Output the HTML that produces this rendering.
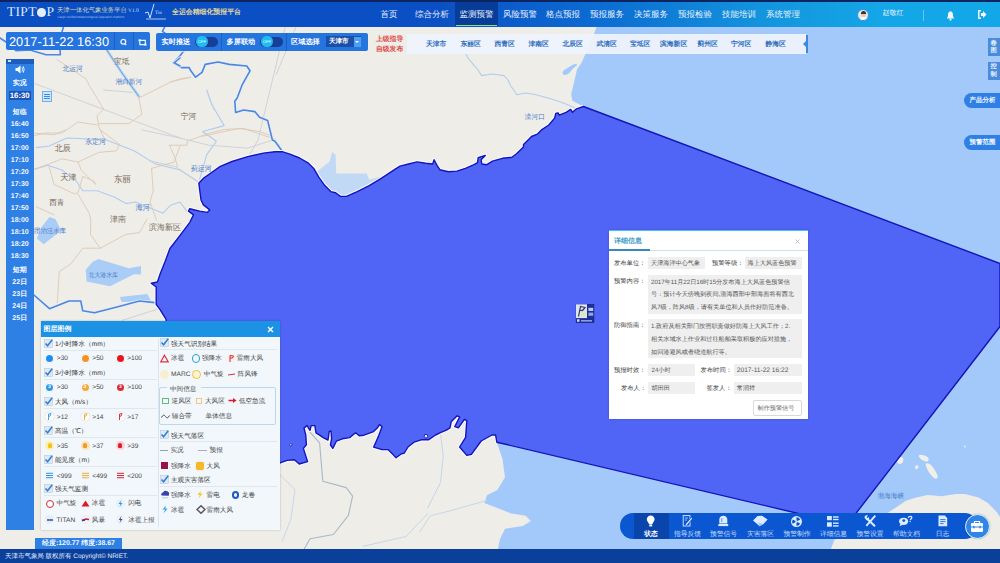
<!DOCTYPE html>
<html><head><meta charset="utf-8">
<style>
*{box-sizing:border-box;margin:0;padding:0}
html,body{width:1000px;height:563px;overflow:hidden;background:#eeede8;font-family:"Liberation Sans",sans-serif;text-rendering:geometricPrecision}
.abs{position:absolute}
#map{position:absolute;left:0;top:0;width:1000px;height:563px}
#hdr{position:absolute;left:0;top:0;width:1000px;height:27px;background:linear-gradient(90deg,#0a4ec2 0%,#0a50c4 44%,#0c6cd2 60%,#1394dc 76%,#14a6e6 88%,#12a8e8 100%);border-top:2px solid #0c2460}
.nav{position:absolute;top:2px;height:24px;line-height:24px;color:#e8f0ff;font-size:8.5px;text-align:center;white-space:nowrap}
.wt{color:#fff}
.sb{position:absolute;left:5.5px;width:28.5px;text-align:center;font-size:7px;line-height:9px;color:#f2f7ff;white-space:nowrap;font-weight:bold}
.lg{position:absolute;font-size:6.6px;line-height:9px;white-space:nowrap;color:#4a4a4a}
.pl{position:absolute;font-size:6.3px;line-height:9px;white-space:nowrap;color:#444}
.pt{position:absolute;font-size:6.15px;line-height:9px;white-space:nowrap;color:#555}
.pb{position:absolute;background:#efefef}
.tx7{font-size:7px;line-height:9px;white-space:nowrap;font-weight:bold}
.dist{top:39.5px;font-size:6.8px;line-height:9px;color:#2c6cbc;white-space:nowrap;font-weight:bold}
</style></head>
<body>
<svg id="map" width="1000" height="563" viewBox="0 0 1000 563">
<rect x="0" y="0" width="1000" height="563" fill="#eeede8"/>
<path d="M49.5,217 L55.4,219 L61.2,230.6 L43.7,244.3 L36.8,238.4 L41.7,226.7 Z" fill="#a9cdf7"/>
<path d="M98.4,259 L139.4,271.6 L110,286.3 L86.6,281.4 L85.7,269.7 L92.5,261.9 Z" fill="#a9cdf7"/>
<path d="M119.8,297 L147.2,294.1 L151,301 L121.8,301.9 Z" fill="#a9cdf7"/>
<path d="M130,268 L141,266 L141,274.6 L130,274 Z" fill="#a9cdf7"/>
<path d="M317.6,171.2 L329.6,161.6 L332,152 L335.6,154.4 L336.2,173.6 L366.8,173.6 L369.2,179.6 L383.6,176 L374,184.4 L357.2,191.6 L346.4,196.4 L335.6,192.8 L324.8,185.6 Z" fill="#c2d9f6"/>
<path d="M599,20 L594,34 L585.6,53.5 L581.6,62.7 L577,69.6 L574.6,80 L571.2,93.9 L572.3,100.8 L579.3,104.3 L582.7,106.6 L1000,263.5 L1000,20 Z" fill="#a2c9f9"/>
<path d="M496.8,442.2 L502.5,459.1 L505,477.2 L497.3,490 L487,495.2 L484.4,502.9 L497.3,508.1 L510.2,513.2 L525.7,515.8 L530.8,521 L523,526.1 L505,528.7 L500,539 L497.3,552 L829.6,552 L834.4,540 L880,518 L895.5,507.7 L905.9,500.8 L916.3,497.4 L927.8,495 L941.7,496.2 L955.5,493.9 L964.8,493.9 L978.6,497.4 L987.9,503.1 L997.1,512.4 L1000,517 L1000,326.5 L847,525 Z" fill="#a2c9f9"/>
<path d="M563,74.8 C561,73 563,70 566,68.5 C569,67 572,64 575.5,63.5 C578,63.5 578,65.5 576,66.5 C573,68 571,72 568,74.5 C566,75.5 564,75.5 563,74.8 Z" fill="#a2c9f9" stroke="#f6f7f5" stroke-width="0.6"/>
<path d="M896.8,460 C897,457.5 900,456.5 902.5,457.5 C904,459 903.5,462.5 901,463.8 C898.5,464.5 896.5,462.5 896.8,460 Z M918.5,455.5 C920.5,454 925,455 928,457.5 C929.5,459.5 928.5,461.8 926,461.5 C923,461 919.5,459 918.5,455.5 Z M915.2,466.5 C915.5,465 917.5,464.8 918.3,466 C918.8,467.8 917.5,469.6 916,469.3 C915,468.8 915,467.5 915.2,466.5 Z M925.5,464 C926.5,462.5 929.5,463 931.5,465.5 C934,468.5 937,473 937.8,476.5 C938,478.5 936,479.3 934,478 C930.5,475 926.5,469.5 925.5,464 Z" fill="#f0efea"/><circle cx="964.8" cy="446.5" r="0.9" fill="#f0efea"/>
<path d="M36.4,147.6 L49.2,146 L66.8,138 L105.2,139.6 L134,150.8 L154.8,163.6 L180,170 L198.8,182.3" fill="none" stroke="#b0cdee" stroke-width="1.1" stroke-linejoin="round" stroke-linecap="round" />
<path d="M34.8,169.2 L47.6,165.2 L62,170 L76.4,181.2 L82.8,190.8 L97.2,190.8 L114.8,197.2 L126,203.6 L135.6,202 L151.6,208.4 L162.8,213.2 L170.8,205.2 L180,202 L187.1,211.6" fill="none" stroke="#b0cdee" stroke-width="1.1" stroke-linejoin="round" stroke-linecap="round" />
<path d="M214.5,110 L210,100 L206.8,90 L212,105 L224.2,125.6 L202.7,131.5 L216.4,141.2 L206.6,154.9 L198.8,182.3" fill="none" stroke="#b0cdee" stroke-width="1.1" stroke-linejoin="round" stroke-linecap="round" />
<path d="M428.1,513.2 L405.9,536.6 L363.3,546.2" fill="none" stroke="#c6d6e8" stroke-width="1" stroke-linejoin="round" stroke-linecap="round" />
<path d="M280,474.8 L295,489.7 L290.8,519.6 L282.3,540.9" fill="none" stroke="#c6d6e8" stroke-width="1" stroke-linejoin="round" stroke-linecap="round" />
<path d="M420,531.3 L430.3,515.8 L451,510.6 L487,500.4" fill="none" stroke="#c6d6e8" stroke-width="1" stroke-linejoin="round" stroke-linecap="round" />
<path d="M427.7,508 L440.6,482.3 L443.2,456.5 L440.6,433.4" fill="none" stroke="#c6d6e8" stroke-width="1" stroke-linejoin="round" stroke-linecap="round" />
<path d="M465.6,53.2 L468,58 L472,62.8 L478,70 L481.6,75.6 L492,74 L504,75.6 L508,80 L510.4,85.2 L516.8,94.8 L526,93 L536,94.8 L548,98 L558.4,101.2 L566,104 L574.4,107.7" fill="none" stroke="#b0cdee" stroke-width="1.1" stroke-linejoin="round" stroke-linecap="round" />
<path d="M106.8,50 L122,73 L138.8,96.4" fill="none" stroke="#b8d6f4" stroke-width="3" stroke-linejoin="round" stroke-linecap="round" />
<path d="M106.8,50 L122,73 L138.8,96.4" fill="none" stroke="#6f9ee0" stroke-width="1" stroke-linejoin="round" stroke-linecap="round" />
<path d="M34.8,83.6 L180,138 L208.6,145.2 L247.7,148.1 L275,139.3" fill="none" stroke="#c9cfd6" stroke-width="0.9" stroke-linejoin="round" stroke-linecap="round" />
<path d="M296,27 L276,75" fill="none" stroke="#c9cfd6" stroke-width="0.9"/><path d="M285.2,27 L258,140 L249.6,154.9" fill="none" stroke="#c9cfd6" stroke-width="0.9" stroke-linejoin="round" stroke-linecap="round" />
<path d="M150,160.8 L175.4,166.6 L198.8,182.3" fill="none" stroke="#c9cfd6" stroke-width="0.9" stroke-linejoin="round" stroke-linecap="round" />
<path d="M142,130 L180,138" fill="none" stroke="#c9cfd6" stroke-width="0.9" stroke-linejoin="round" stroke-linecap="round" />
<path d="M121.8,320.5 L164.8,306.8" fill="none" stroke="#c9cfd6" stroke-width="0.9" stroke-linejoin="round" stroke-linecap="round" />
<path d="M103.6,90 L132.4,92.4" fill="none" stroke="#c9cfd6" stroke-width="0.9" stroke-linejoin="round" stroke-linecap="round" />
<path d="M57,59.6 L86,78.8 L89,85 L103.6,109 L97,115.6 L98.8,126.8 L105,140" fill="none" stroke="#dcc8b4" stroke-width="0.9" stroke-linejoin="round" stroke-linecap="round" />
<path d="M138.8,98 L142,114 L129,123.6 L98.8,123.6" fill="none" stroke="#dcc8b4" stroke-width="0.9" stroke-linejoin="round" stroke-linecap="round" />
<path d="M138.8,98 L170.8,82 L180,78.8 L190.8,77.2" fill="none" stroke="#dcc8b4" stroke-width="0.9" stroke-linejoin="round" stroke-linecap="round" />
<path d="M30,136.4 L46,133 L62,133 L78,122 L97,125" fill="none" stroke="#dcc8b4" stroke-width="0.9" stroke-linejoin="round" stroke-linecap="round" />
<path d="M34.8,133.2 L54,134.8 L65.2,130" fill="none" stroke="#dcc8b4" stroke-width="0.9" stroke-linejoin="round" stroke-linecap="round" />
<path d="M100.4,130 L119.6,144.4 L116.4,150.8 L98.8,152.4 L78,162 L62,158.8 L46,165.2 L34.8,169" fill="none" stroke="#dcc8b4" stroke-width="0.9" stroke-linejoin="round" stroke-linecap="round" />
<path d="M49.2,166.8 L54,184.4 L74.8,194 L78,192.4 L82.8,176.4 L94,181.2 L95.6,184.4 L81.2,170 L78,162" fill="none" stroke="#dcc8b4" stroke-width="0.9" stroke-linejoin="round" stroke-linecap="round" />
<path d="M78,194 L89.2,213.2 L90.8,220 L90.5,234.5 L100.3,248.2 L125.7,234.5 L139.4,232.6 L147.2,218.9" fill="none" stroke="#dcc8b4" stroke-width="0.9" stroke-linejoin="round" stroke-linecap="round" />
<path d="M100.3,248.2 L82.7,248.2 L71,263.8 L59.3,271.6 L57.3,302.9" fill="none" stroke="#dcc8b4" stroke-width="0.9" stroke-linejoin="round" stroke-linecap="round" />
<path d="M36.4,206.8 L54,214.8" fill="none" stroke="#dcc8b4" stroke-width="0.9" stroke-linejoin="round" stroke-linecap="round" />
<path d="M151.6,168.4 L153.2,190.8 L150,202 L156.4,220" fill="none" stroke="#dcc8b4" stroke-width="0.9" stroke-linejoin="round" stroke-linecap="round" />
<path d="M151.6,168.4 L174,162 L180,146" fill="none" stroke="#dcc8b4" stroke-width="0.9" stroke-linejoin="round" stroke-linecap="round" />
<path d="M169.5,145.2 L187.1,145.2 L187.1,141.2 L208.6,133.4 L224.2,129.5 L243.8,128.5 L275,139.3" fill="none" stroke="#dcc8b4" stroke-width="0.9" stroke-linejoin="round" stroke-linecap="round" />
<path d="M169.5,145.2 L175.4,158.8 L177.3,166.6" fill="none" stroke="#dcc8b4" stroke-width="0.9" stroke-linejoin="round" stroke-linecap="round" />
<path d="M170,82 L190.8,77.2" fill="none" stroke="#dcc8b4" stroke-width="0.9" stroke-linejoin="round" stroke-linecap="round" />
<path d="M202,136.4 L238.8,128.4 L259.6,131.6 L272.4,136.4" fill="none" stroke="#dcc8b4" stroke-width="0.9" stroke-linejoin="round" stroke-linecap="round" />
<path d="M64,25 L62,32 L61,45 L60,50 L60.4,54.8 L46,54.8 L30,50 L16,50.6 L6,42 L0,38" fill="none" stroke="#e6eef8" stroke-width="3.2" stroke-linejoin="round" stroke-linecap="round" />
<path d="M64,25 L62,32 L61,45 L60,50 L60.4,54.8 L46,54.8 L30,50 L16,50.6 L6,42 L0,38" fill="none" stroke="#4f86dc" stroke-width="1.6" stroke-linejoin="round" stroke-linecap="round" />
<path d="M184.4,50 L179.6,56.4 L173.2,62.8 L181.2,67.6 L189.2,67.6 L190.8,70.8 L195.6,77.2 L202,72.4 L205.2,64.4 L218,62 L229.2,64.4 L246.8,66 L250,70.8 L242,85.2 L237.2,98 L234.8,101.2 L235.6,112.4 L243.6,110 L254.8,111.6 L259.6,117.2 L267.6,120.4 L272.4,140 L275,141.2 L282.8,152" fill="none" stroke="#e6eef8" stroke-width="3.2" stroke-linejoin="round" stroke-linecap="round" />
<path d="M184.4,50 L179.6,56.4 L173.2,62.8 L181.2,67.6 L189.2,67.6 L190.8,70.8 L195.6,77.2 L202,72.4 L205.2,64.4 L218,62 L229.2,64.4 L246.8,66 L250,70.8 L242,85.2 L237.2,98 L234.8,101.2 L235.6,112.4 L243.6,110 L254.8,111.6 L259.6,117.2 L267.6,120.4 L272.4,140 L275,141.2 L282.8,152" fill="none" stroke="#4f86dc" stroke-width="1.6" stroke-linejoin="round" stroke-linecap="round" />
<path d="M183.2,50.6 L175,40 L162.4,31.4 L165.6,25" fill="none" stroke="#e6eef8" stroke-width="3.2" stroke-linejoin="round" stroke-linecap="round" />
<path d="M183.2,50.6 L175,40 L162.4,31.4 L165.6,25" fill="none" stroke="#4f86dc" stroke-width="1.6" stroke-linejoin="round" stroke-linecap="round" />
<path d="M180,58 L174,62.8 L180,66" fill="none" stroke="#e6eef8" stroke-width="3.2" stroke-linejoin="round" stroke-linecap="round" />
<path d="M180,58 L174,62.8 L180,66" fill="none" stroke="#4f86dc" stroke-width="1.6" stroke-linejoin="round" stroke-linecap="round" />
<path d="M33.9,295 L49.5,308.7 L69,301 L80.8,301 L82.7,310.7 L94.5,312.7 L117.9,306.8 L139.4,301 L157,302.9" fill="none" stroke="#e6eef8" stroke-width="3.2" stroke-linejoin="round" stroke-linecap="round" />
<path d="M33.9,295 L49.5,308.7 L69,301 L80.8,301 L82.7,310.7 L94.5,312.7 L117.9,306.8 L139.4,301 L157,302.9" fill="none" stroke="#4f86dc" stroke-width="1.6" stroke-linejoin="round" stroke-linecap="round" />
<path d="M310,432.1 L319.6,442.8 L322.8,481.2 L346.2,487.6 L352.6,496.1 L348.4,515.3 L333.4,534.5 L310,538.7 L303.6,550" fill="none" stroke="#a9b8c8" stroke-width="1.1" stroke-linejoin="round" stroke-linecap="round" />
<path d="M166.7,330 L166.1,319.4 L159.9,309.4 L156.2,304.4 L156.2,287 L151.2,283.3 L157.4,282 L159.9,274.6 L164.9,262.1 L169.9,248.5 L174.8,242.2 L182.3,232.3 L189.8,222.3 L193.5,214.9 L188.5,211.1 L189.8,208.7 L199.7,211.1 L207.2,212.4 L209.7,209.9 L203.4,204.9 L201,200 L199.7,190 L198.8,183.2 L203.7,178.1 L210.5,173.2 L220.3,166.4 L232,161.5 L247.7,156.6 L263.3,153.1 L275,151.8 L282.8,151.8 L290,154.2 L299.6,158 L308,162.8 L314,168.8 L318.8,177.2 L324.8,185.6 L330.8,191.6 L335.6,192.8 L340.4,196.4 L346.4,196.4 L357.2,191.6 L369.2,185.6 L381.2,178.4 L395.6,168.8 L400,166.1 L408.5,164 L417.1,161.9 L425.6,163.3 L432.7,164 L434.1,159.7 L437,165.4 L439.8,169.7 L448.4,171.8 L456.9,171.1 L465.4,168.3 L474,164.7 L477.5,162.6 L478.2,157.6 L485.3,155.5 L481.1,159.7 L481.8,164 L486.8,164.7 L492.5,161.2 L502.4,158.3 L511.9,157.3 L516.5,153.8 L523.5,146.9 L523.5,144.6 L528.1,140 L531.5,136.5 L537.3,134.2 L541.9,129.6 L548.8,125 L554.6,118.1 L555.8,113.5 L558.1,112.9 L559.2,115.2 L566.1,112.3 L570.7,109.4 L572.5,112.3 L576.5,108.8 L583.4,106.5 M496.8,442.2 L495.6,435 L492,435 L481.2,441 L471.6,454.2 L466.8,455.4 L459.6,447 L465.6,437.4 L466.8,420.6 L464.4,419.4 L458.4,427.8 L454.8,426.6 L459.6,417 L457.2,415.8 L451.2,421.8 L450,427.8 L446.4,430.2 L440.4,432.6 L435.6,435 L428.4,439.8 L421.2,439.8 L414,442.2 L408,447 L404.4,453 L400.8,454.2 L396,457.8 L394,455.6 L388,449.6 L382,449.6 L373.6,447.2 L378.4,436.4 L382,426.8 L379.6,424.4 L377.2,428 L373.6,431.6 L364,435.2 L359.2,435.8 L355.6,432.8 L349.6,437.6 L342.4,438.8 L336.4,441.2 L332.8,448.4 L330.4,444.8 L331.6,438.8 L331,431 L329.2,431.6 L328,440 L323.2,437.6 L319.6,435.2 L316,432.8 L314.8,425.6 L311.2,425.6 L310,430.4 L307,425.6 L304,428 L305.8,435.2 L306.4,444.8 L303.4,448.4 L307.6,461.6 L299.2,464 L294.4,459.8 L287.2,460.4 L280,462.8" fill="none" stroke="#f8f9fb" stroke-width="3.5" stroke-linejoin="round"/>
<path d="M166.7,330 L166.1,319.4 L159.9,309.4 L156.2,304.4 L156.2,287 L151.2,283.3 L157.4,282 L159.9,274.6 L164.9,262.1 L169.9,248.5 L174.8,242.2 L182.3,232.3 L189.8,222.3 L193.5,214.9 L188.5,211.1 L189.8,208.7 L199.7,211.1 L207.2,212.4 L209.7,209.9 L203.4,204.9 L201,200 L199.7,190 L198.8,183.2 L203.7,178.1 L210.5,173.2 L220.3,166.4 L232,161.5 L247.7,156.6 L263.3,153.1 L275,151.8 L282.8,151.8 L290,154.2 L299.6,158 L308,162.8 L314,168.8 L318.8,177.2 L324.8,185.6 L330.8,191.6 L335.6,192.8 L340.4,196.4 L346.4,196.4 L357.2,191.6 L369.2,185.6 L381.2,178.4 L395.6,168.8 L400,166.1 L408.5,164 L417.1,161.9 L425.6,163.3 L432.7,164 L434.1,159.7 L437,165.4 L439.8,169.7 L448.4,171.8 L456.9,171.1 L465.4,168.3 L474,164.7 L477.5,162.6 L478.2,157.6 L485.3,155.5 L481.1,159.7 L481.8,164 L486.8,164.7 L492.5,161.2 L502.4,158.3 L511.9,157.3 L516.5,153.8 L523.5,146.9 L523.5,144.6 L528.1,140 L531.5,136.5 L537.3,134.2 L541.9,129.6 L548.8,125 L554.6,118.1 L555.8,113.5 L558.1,112.9 L559.2,115.2 L566.1,112.3 L570.7,109.4 L572.5,112.3 L576.5,108.8 L583.4,106.5 L1000,263.5 L1000,326.5 L847,525 L496.8,442.2 L495.6,435 L492,435 L481.2,441 L471.6,454.2 L466.8,455.4 L459.6,447 L465.6,437.4 L466.8,420.6 L464.4,419.4 L458.4,427.8 L454.8,426.6 L459.6,417 L457.2,415.8 L451.2,421.8 L450,427.8 L446.4,430.2 L440.4,432.6 L435.6,435 L428.4,439.8 L421.2,439.8 L414,442.2 L408,447 L404.4,453 L400.8,454.2 L396,457.8 L394,455.6 L388,449.6 L382,449.6 L373.6,447.2 L378.4,436.4 L382,426.8 L379.6,424.4 L377.2,428 L373.6,431.6 L364,435.2 L359.2,435.8 L355.6,432.8 L349.6,437.6 L342.4,438.8 L336.4,441.2 L332.8,448.4 L330.4,444.8 L331.6,438.8 L331,431 L329.2,431.6 L328,440 L323.2,437.6 L319.6,435.2 L316,432.8 L314.8,425.6 L311.2,425.6 L310,430.4 L307,425.6 L304,428 L305.8,435.2 L306.4,444.8 L303.4,448.4 L307.6,461.6 L299.2,464 L294.4,459.8 L287.2,460.4 L280,462.8 L270,480 L200,480 Z" fill="#5064f6" stroke="#1414b8" stroke-width="1.4" stroke-linejoin="round"/>
<circle cx="426" cy="436.2" r="1.8" fill="#eeede8" stroke="#1414b8" stroke-width="0.9"/><circle cx="290.8" cy="444.8" r="1.2" fill="#eeede8" stroke="#1414b8" stroke-width="0.8"/>
<text x="62.6" y="70.5452" font-size="7.07" fill="#4a7cc8" font-family="Liberation Sans" textLength="20.2" lengthAdjust="spacingAndGlyphs">北运河</text>
<text x="114" y="64.1295" font-size="8.14" fill="#7a6a5a" font-family="Liberation Sans" textLength="15.5" lengthAdjust="spacingAndGlyphs">宝坻</text>
<text x="115.5" y="83.9043" font-size="6.96" fill="#4a7cc8" font-family="Liberation Sans" textLength="26.5" lengthAdjust="spacingAndGlyphs">潮白新河</text>
<text x="180.8" y="118.93" font-size="8.14" fill="#7a6a5a" font-family="Liberation Sans" textLength="15.5" lengthAdjust="spacingAndGlyphs">宁河</text>
<text x="85.2" y="143.821" font-size="7.28" fill="#4a7cc8" font-family="Liberation Sans" textLength="20.8" lengthAdjust="spacingAndGlyphs">永定河</text>
<text x="54.8" y="150.624" font-size="8.40" fill="#7a6a5a" font-family="Liberation Sans" textLength="16" lengthAdjust="spacingAndGlyphs">北辰</text>
<text x="60.4" y="180.224" font-size="8.40" fill="#7a6a5a" font-family="Liberation Sans" textLength="16" lengthAdjust="spacingAndGlyphs">天津</text>
<text x="114" y="181.975" font-size="8.82" fill="#7a6a5a" font-family="Liberation Sans" textLength="16.8" lengthAdjust="spacingAndGlyphs">东丽</text>
<text x="191" y="171.183" font-size="7.17" fill="#4a7cc8" font-family="Liberation Sans" textLength="20.5" lengthAdjust="spacingAndGlyphs">蓟运河</text>
<text x="135.6" y="209.522" font-size="7.56" fill="#4a7cc8" font-family="Liberation Sans" textLength="14.4" lengthAdjust="spacingAndGlyphs">海河</text>
<text x="49.2" y="204.873" font-size="7.98" fill="#7a6a5a" font-family="Liberation Sans" textLength="15.2" lengthAdjust="spacingAndGlyphs">西青</text>
<text x="110" y="221.824" font-size="8.40" fill="#7a6a5a" font-family="Liberation Sans" textLength="16" lengthAdjust="spacingAndGlyphs">津南</text>
<text x="149" y="230.024" font-size="8.40" fill="#7a6a5a" font-family="Liberation Sans" textLength="32" lengthAdjust="spacingAndGlyphs">滨海新区</text>
<text x="34" y="232.619" font-size="6.72" fill="#4a7cc8" font-family="Liberation Sans" textLength="32" lengthAdjust="spacingAndGlyphs">团泊洼水库</text>
<text x="88.6" y="276.815" font-size="6.15" fill="#4a7cc8" font-family="Liberation Sans" textLength="29.3" lengthAdjust="spacingAndGlyphs">北大港水库</text>
<text x="524.8" y="118.52" font-size="7.00" fill="#4a7cc8" font-family="Liberation Sans" textLength="20" lengthAdjust="spacingAndGlyphs">滦河口</text>
<text x="877.6" y="498.095" font-size="6.93" fill="#4a7cc8" font-family="Liberation Sans" textLength="26.4" lengthAdjust="spacingAndGlyphs">渤海海峡</text>
</svg>

<div id="hdr"></div>
<!-- header content -->
<div class="abs" style="left:7px;top:5px;font-family:'Liberation Serif',serif;font-size:13.5px;color:#dfe9ff;letter-spacing:0.3px;line-height:14px">TIPT<span style="display:inline-block;width:8.5px;height:8.5px;border-radius:50%;background:#e4ecf8;vertical-align:-0.5px;margin:0 0.6px"></span>P</div>
<div class="abs" style="left:57px;top:6px;font-size:6.35px;line-height:9px;color:#d8dcb8;white-space:nowrap">天津一体化气象业务平台</div>
<div class="abs" style="left:128px;top:7px;font-size:5.5px;line-height:8px;color:#c9dcff;font-family:'Liberation Serif',serif">V1.0</div>
<div class="abs" style="left:57px;top:14.5px;font-size:3.1px;line-height:4px;color:#a8c4f0;white-space:nowrap">Tianjin Unified Meteorological Operation Platform</div>
<svg class="abs" style="left:144px;top:3px" width="26" height="18" viewBox="0 0 26 18"><path d="M1,10 L4,9 L6,15 L10,1" stroke="#cfe0ff" stroke-width="1" fill="none"/><text x="11" y="11" font-size="5" fill="#cfe0ff" font-family="Liberation Serif">Tm</text><rect x="2" y="15.5" width="20" height="1" fill="#a9c4ee"/></svg>
<div class="abs" style="left:172px;top:8px;font-size:6.9px;line-height:10px;color:#eadf98;font-family:'Liberation Serif',serif;white-space:nowrap;-webkit-text-stroke:0.2px #eadf98">全运会精细化预报平台</div>
<div class="nav" style="left:377px;width:24px">首页</div>
<div class="nav" style="left:412px;width:40px">综合分析</div>
<div class="abs" style="left:455px;top:2px;width:43px;height:24px;background:#073c98"></div>
<div class="abs" style="left:456px;top:24.5px;width:41px;height:1.5px;background:#8fe08a"></div>
<div class="nav" style="left:455px;width:43px">监测预警</div>
<div class="nav" style="left:500px;width:40px">风险预警</div>
<div class="nav" style="left:543px;width:40px">格点预报</div>
<div class="nav" style="left:587px;width:40px">预报服务</div>
<div class="nav" style="left:631px;width:40px">决策服务</div>
<div class="nav" style="left:675px;width:40px">预报检验</div>
<div class="nav" style="left:719px;width:40px">技能培训</div>
<div class="nav" style="left:763px;width:40px">系统管理</div>
<div class="abs" style="left:857px;top:8.8px;width:12px;height:12px;border-radius:50%;background:#dfe8f2;overflow:hidden;border:1px solid #3f8fdc"><div class="abs" style="left:3px;top:2px;width:5px;height:5px;border-radius:50%;background:#e9c9a8"></div><div class="abs" style="left:3px;top:1.5px;width:5px;height:2.5px;border-radius:3px 3px 0 0;background:#333"></div><div class="abs" style="left:1.5px;top:7.5px;width:8px;height:5px;border-radius:4px 4px 0 0;background:#fff"></div></div>
<div class="nav" style="left:880px;width:26px;font-size:7px">赵敬红</div>
<div class="abs" style="left:923px;top:10px;width:1px;height:11px;background:#6cc4ee"></div>
<svg class="abs" style="left:945.5px;top:11px" width="9" height="10" viewBox="0 0 9 10"><path d="M4.5,0.5 C2,0.5 2,3 2,5 L1,7.5 L8,7.5 L7,5 C7,3 7,0.5 4.5,0.5 Z" fill="#f4f8ff"/><circle cx="4.5" cy="8.6" r="1.1" fill="#f4f8ff"/></svg>
<svg class="abs" style="left:977px;top:9px" width="10" height="11" viewBox="0 0 10 11"><path d="M1,1 L4,1 L4,2.5 L2.5,2.5 L2.5,8.5 L4,8.5 L4,10 L1,10 Z" fill="#f4f8ff"/><path d="M4,4 L6,4 L6,2 L9.5,5.5 L6,9 L6,7 L4,7 Z" fill="#f4f8ff"/></svg>

<!-- date box -->
<div class="abs" style="left:6px;top:32.3px;width:144px;height:18.2px;background:#2674de;border-radius:2px"></div>
<div class="abs" style="left:9px;top:33.8px;font-size:12.8px;line-height:16px;color:#fff;white-space:nowrap">2017-11-22 16:30</div>
<div class="abs" style="left:114px;top:32.3px;width:0.8px;height:18.2px;background:#1b5ec4"></div>
<div class="abs" style="left:132.5px;top:32.3px;width:0.8px;height:18.2px;background:#1b5ec4"></div>
<svg class="abs" style="left:119px;top:38px" width="9" height="8" viewBox="0 0 9 8"><circle cx="4.3" cy="3.8" r="2.4" stroke="#eaf4ff" stroke-width="1.3" fill="none"/><path d="M5.8,5.6 L7.3,7" stroke="#eaf4ff" stroke-width="1.2"/></svg>
<svg class="abs" style="left:137.5px;top:38.5px" width="9" height="7" viewBox="0 0 9 7"><path d="M1.8,1.3 L7.3,1.3 L7.3,5.6 L1.8,5.6 Z" stroke="#eaf4ff" stroke-width="1.2" fill="none"/><rect x="0.5" y="0.3" width="2.2" height="2" fill="#eaf4ff"/><rect x="6.3" y="4.6" width="2.2" height="2" fill="#eaf4ff"/></svg>
<!-- toggles box -->
<div class="abs" style="left:156px;top:32.5px;width:212px;height:18px;background:#2674de;border-radius:2px"></div>
<div class="abs tx7" style="left:161.5px;top:37px;color:#fff;font-size:7.2px">实时推送</div>
<div class="abs" style="left:195px;top:36.5px;width:22.5px;height:10.5px;border-radius:5.5px;background:#173f96"></div>
<div class="abs" style="left:196.2px;top:35.8px;width:11.5px;height:11.5px;border-radius:50%;background:#22bdf0;font-size:4px;color:#e8fbff;text-align:center;line-height:11.5px">OFF</div>
<div class="abs" style="left:221px;top:33px;width:1px;height:18px;background:#1b5ec4"></div>
<div class="abs tx7" style="left:226.5px;top:37px;color:#fff;font-size:7.2px">多屏联动</div>
<div class="abs" style="left:260px;top:36.5px;width:22.5px;height:10.5px;border-radius:5.5px;background:#173f96"></div>
<div class="abs" style="left:261.2px;top:35.8px;width:11.5px;height:11.5px;border-radius:50%;background:#22bdf0;font-size:4px;color:#e8fbff;text-align:center;line-height:11.5px">OFF</div>
<div class="abs" style="left:286px;top:33px;width:1px;height:18px;background:#1b5ec4"></div>
<div class="abs tx7" style="left:291px;top:37px;color:#fff;font-size:7.2px">区域选择</div>
<div class="abs" style="left:326px;top:36px;width:35px;height:11px;background:#1c4fa8"></div>
<div class="abs tx7" style="left:329px;top:37px;color:#fff;font-size:6.5px">天津市</div>
<div class="abs" style="left:353.5px;top:36.5px;width:7px;height:10px;background:#4a9ff0"></div>
<div class="abs" style="left:355px;top:41px;width:0;height:0;border-left:2px solid transparent;border-right:2px solid transparent;border-top:2.5px solid #fff"></div>
<!-- red text -->
<div class="abs" style="left:376px;top:34.5px;font-size:6.8px;line-height:10px;color:#e04a4a;white-space:nowrap;font-weight:bold">上级指导<br>自级发布</div>
<!-- district bar -->
<div class="abs" style="left:407px;top:34px;width:399px;height:19.5px;background:rgba(238,243,252,0.95)"></div>
<div class="abs" style="left:806px;top:35px;width:2px;height:18px;background:#3f88dc"></div>
<div class="abs" style="left:803px;top:40.5px;width:0;height:0;border-top:3.5px solid transparent;border-bottom:3.5px solid transparent;border-right:3px solid #3f88dc"></div>
<div class="abs dist" style="left:426px">天津市</div>
<div class="abs dist" style="left:460.5px">东丽区</div>
<div class="abs dist" style="left:494.5px">西青区</div>
<div class="abs dist" style="left:528.5px">津南区</div>
<div class="abs dist" style="left:562.5px">北辰区</div>
<div class="abs dist" style="left:596.5px">武清区</div>
<div class="abs dist" style="left:630px">宝坻区</div>
<div class="abs dist" style="left:660px">滨海新区</div>
<div class="abs dist" style="left:697.5px">蓟州区</div>
<div class="abs dist" style="left:731px">宁河区</div>
<div class="abs dist" style="left:765.5px">静海区</div>
<!-- left sidebar -->
<div class="abs" style="left:5.5px;top:58.5px;width:28.5px;height:471px;background:#2f80e4"></div>
<div class="abs" style="left:5.5px;top:58.5px;width:28.5px;height:5px;background:#1d5cc0"></div>
<div class="abs" style="left:8px;top:60px;width:3px;height:1.5px;background:#cfe0ff"></div>
<svg class="abs" style="left:15px;top:65px" width="10" height="9" viewBox="0 0 10 9"><path d="M0.5,3 L2.5,3 L5.5,0.5 L5.5,8.5 L2.5,6 L0.5,6 Z" fill="#fff"/><path d="M7,2.5 Q8.3,4.5 7,6.5 M8.2,1.3 Q10.2,4.5 8.2,7.7" stroke="#fff" stroke-width="0.9" fill="none"/></svg>
<div class="sb" style="top:79px;font-size:7px">实况</div>
<div class="abs" style="left:8.5px;top:91px;width:22.5px;height:9px;background:#1b54b4"></div>
<div class="sb" style="top:91px;font-size:7.8px;color:#fff">16:30</div>
<div class="sb" style="top:107.5px;font-size:7px">短临</div>
<div class="sb" style="top:119.5px">16:40</div>
<div class="sb" style="top:131.5px">16:50</div>
<div class="sb" style="top:143.5px">17:00</div>
<div class="sb" style="top:155.5px">17:10</div>
<div class="sb" style="top:167.5px">17:20</div>
<div class="sb" style="top:179.5px">17:30</div>
<div class="sb" style="top:191.5px">17:40</div>
<div class="sb" style="top:203.5px">17:50</div>
<div class="sb" style="top:215.5px">18:00</div>
<div class="sb" style="top:227.5px">18:10</div>
<div class="sb" style="top:239.5px">18:20</div>
<div class="sb" style="top:251.5px">18:30</div>
<div class="sb" style="top:266px;font-size:7px">短期</div>
<div class="sb" style="top:278px">22日</div>
<div class="sb" style="top:290px">23日</div>
<div class="sb" style="top:302px">24日</div>
<div class="sb" style="top:314px">25日</div>
<!-- small icon near sidebar -->
<div class="abs" style="left:41.5px;top:91px;width:10.5px;height:10.5px;background:#cfe6fb;border:1px solid #6fb0ea"></div>
<div class="abs" style="left:44px;top:93.5px;width:5.5px;height:1px;background:#3a8ee0"></div>
<div class="abs" style="left:44px;top:95.8px;width:5.5px;height:1px;background:#3a8ee0"></div>
<div class="abs" style="left:44px;top:98.1px;width:5.5px;height:1px;background:#3a8ee0"></div>
<!-- right buttons -->
<div class="abs" style="left:988px;top:37.5px;width:14px;height:18px;background:#4a8cdb"></div>
<div class="abs" style="left:990.5px;top:39.5px;font-size:6.3px;line-height:7.6px;color:#e4eefc;width:8px;font-weight:bold">卷<br>图</div>
<div class="abs" style="left:988px;top:61.5px;width:14px;height:18px;background:#4a8cdb"></div>
<div class="abs" style="left:990.5px;top:63px;font-size:6.3px;line-height:7.6px;color:#e4eefc;width:8px;font-weight:bold">控<br>制</div>
<div class="abs" style="left:963.5px;top:92.5px;width:45px;height:15px;background:#2f80e4;border-radius:8px"></div>
<div class="abs" style="left:969.5px;top:95.8px;font-size:6.5px;line-height:9px;color:#f4f8ff;white-space:nowrap;font-weight:bold">产品分析</div>
<div class="abs" style="left:963.5px;top:134.5px;width:45px;height:15px;background:#2f80e4;border-radius:8px"></div>
<div class="abs" style="left:969.5px;top:137.8px;font-size:6.5px;line-height:9px;color:#f4f8ff;white-space:nowrap;font-weight:bold">预警范围</div>
<!-- legend panel -->
<div class="abs" style="left:40.5px;top:321px;width:239.5px;height:209px;background:#f2f7fc;box-shadow:0 0 2px rgba(0,0,0,0.25)"></div>
<div class="abs" style="left:40.5px;top:321px;width:239.5px;height:15.5px;background:#1b92e4"></div>
<div class="abs" style="left:43.5px;top:324.5px;font-size:7px;line-height:9px;color:#fff;font-weight:bold;white-space:nowrap">图层图例</div>
<svg class="abs" style="left:266.5px;top:326px" width="7" height="7" viewBox="0 0 7 7"><path d="M1,1 L6,6 M6,1 L1,6" stroke="#fff" stroke-width="1.4"/></svg>
<svg class="abs" style="left:44.0px;top:338.6px" width="9" height="9" viewBox="0 0 9 9"><rect x="0.5" y="0.5" width="8" height="8" fill="#dfe9f5" stroke="#b9c9dc" stroke-width="0.6"/><path d="M1.5,4.5 L3.6,6.8 L8.2,0.8" stroke="#2f7fd8" stroke-width="1.5" fill="none"/></svg><div class="lg" style="left:55.0px;top:339.8px;color:#333">1小时降水（mm）</div><div class="abs" style="left:43.5px;top:349.6px;width:113px;height:1px;background:#dfe6ee"></div><svg class="abs" style="left:44.0px;top:367.8px" width="9" height="9" viewBox="0 0 9 9"><rect x="0.5" y="0.5" width="8" height="8" fill="#dfe9f5" stroke="#b9c9dc" stroke-width="0.6"/><path d="M1.5,4.5 L3.6,6.8 L8.2,0.8" stroke="#2f7fd8" stroke-width="1.5" fill="none"/></svg><div class="lg" style="left:55.0px;top:369px;color:#333">3小时降水（mm）</div><div class="abs" style="left:43.5px;top:378.8px;width:113px;height:1px;background:#dfe6ee"></div><svg class="abs" style="left:44.0px;top:396.7px" width="9" height="9" viewBox="0 0 9 9"><rect x="0.5" y="0.5" width="8" height="8" fill="#dfe9f5" stroke="#b9c9dc" stroke-width="0.6"/><path d="M1.5,4.5 L3.6,6.8 L8.2,0.8" stroke="#2f7fd8" stroke-width="1.5" fill="none"/></svg><div class="lg" style="left:55.0px;top:397.9px;color:#333">大风（m/s）</div><div class="abs" style="left:43.5px;top:407.7px;width:113px;height:1px;background:#dfe6ee"></div><svg class="abs" style="left:44.0px;top:425.6px" width="9" height="9" viewBox="0 0 9 9"><rect x="0.5" y="0.5" width="8" height="8" fill="#dfe9f5" stroke="#b9c9dc" stroke-width="0.6"/><path d="M1.5,4.5 L3.6,6.8 L8.2,0.8" stroke="#2f7fd8" stroke-width="1.5" fill="none"/></svg><div class="lg" style="left:55.0px;top:426.8px;color:#333">高温（℃）</div><div class="abs" style="left:43.5px;top:436.6px;width:113px;height:1px;background:#dfe6ee"></div><svg class="abs" style="left:44.0px;top:455px" width="9" height="9" viewBox="0 0 9 9"><rect x="0.5" y="0.5" width="8" height="8" fill="#dfe9f5" stroke="#b9c9dc" stroke-width="0.6"/><path d="M1.5,4.5 L3.6,6.8 L8.2,0.8" stroke="#2f7fd8" stroke-width="1.5" fill="none"/></svg><div class="lg" style="left:55.0px;top:456.2px;color:#333">能见度（m）</div><div class="abs" style="left:43.5px;top:466px;width:113px;height:1px;background:#dfe6ee"></div><svg class="abs" style="left:44.0px;top:484px" width="9" height="9" viewBox="0 0 9 9"><rect x="0.5" y="0.5" width="8" height="8" fill="#dfe9f5" stroke="#b9c9dc" stroke-width="0.6"/><path d="M1.5,4.5 L3.6,6.8 L8.2,0.8" stroke="#2f7fd8" stroke-width="1.5" fill="none"/></svg><div class="lg" style="left:55.0px;top:485.2px;color:#333">强天气监测</div><div class="abs" style="left:43.5px;top:495px;width:113px;height:1px;background:#dfe6ee"></div><div class="abs" style="left:45.0px;top:353.5px;width:9px;height:9px;border-radius:50%;background:#fff;box-shadow:0 0 1px #ccd"></div><div class="abs" style="left:46.0px;top:354.5px;width:7px;height:7px;border-radius:50%;background:#1c8ff0"></div><div class="lg" style="left:56.8px;top:354.2px;color:#484848">&gt;30</div><div class="abs" style="left:80.5px;top:353.5px;width:9px;height:9px;border-radius:50%;background:#fff;box-shadow:0 0 1px #ccd"></div><div class="abs" style="left:81.5px;top:354.5px;width:7px;height:7px;border-radius:50%;background:#f7901e"></div><div class="lg" style="left:92.3px;top:354.2px;color:#484848">&gt;50</div><div class="abs" style="left:115.8px;top:353.5px;width:9px;height:9px;border-radius:50%;background:#fff;box-shadow:0 0 1px #ccd"></div><div class="abs" style="left:116.8px;top:354.5px;width:7px;height:7px;border-radius:50%;background:#e8141c"></div><div class="lg" style="left:127.2px;top:354.2px;color:#484848">&gt;100</div><div class="abs" style="left:45.0px;top:382.7px;width:9px;height:9px;border-radius:50%;background:#fff;box-shadow:0 0 1px #ccd"></div><div class="abs" style="left:46.0px;top:383.7px;width:7px;height:7px;border-radius:50%;background:#2a9ae8"></div><div class="abs" style="left:46px;top:383.7px;font-size:5px;line-height:7px;width:7px;text-align:center;color:#fff;font-weight:bold">3</div><div class="lg" style="left:56.8px;top:383.4px;color:#484848">&gt;30</div><div class="abs" style="left:80.5px;top:382.7px;width:9px;height:9px;border-radius:50%;background:#fff;box-shadow:0 0 1px #ccd"></div><div class="abs" style="left:81.5px;top:383.7px;width:7px;height:7px;border-radius:50%;background:#f4a838"></div><div class="abs" style="left:81.5px;top:383.7px;font-size:5px;line-height:7px;width:7px;text-align:center;color:#fff;font-weight:bold">3</div><div class="lg" style="left:92.3px;top:383.4px;color:#484848">&gt;50</div><div class="abs" style="left:115.8px;top:382.7px;width:9px;height:9px;border-radius:50%;background:#fff;box-shadow:0 0 1px #ccd"></div><div class="abs" style="left:116.8px;top:383.7px;width:7px;height:7px;border-radius:50%;background:#d8283a"></div><div class="abs" style="left:116.8px;top:383.7px;font-size:5px;line-height:7px;width:7px;text-align:center;color:#fff;font-weight:bold">3</div><div class="lg" style="left:127.2px;top:383.4px;color:#484848">&gt;100</div><div class="abs" style="left:45.0px;top:412.3px;width:9px;height:9px;border-radius:50%;background:#fbfcfd;box-shadow:0 0 1px #bbb"></div><svg class="abs" style="left:45.0px;top:412.3px" width="9" height="9" viewBox="0 0 9 9"><path d="M3.5,8 L3.5,2 L6,1.5 L5,4 L3.5,4.5" stroke="#4aa0e0" stroke-width="1" fill="none"/></svg><div class="lg" style="left:56.8px;top:413px;color:#484848">&gt;12</div><div class="abs" style="left:80.5px;top:412.3px;width:9px;height:9px;border-radius:50%;background:#fbfcfd;box-shadow:0 0 1px #bbb"></div><svg class="abs" style="left:80.5px;top:412.3px" width="9" height="9" viewBox="0 0 9 9"><path d="M3.5,8 L3.5,2 L6,1.5 L5,4 L3.5,4.5" stroke="#f0b040" stroke-width="1" fill="none"/></svg><div class="lg" style="left:92.3px;top:413px;color:#484848">&gt;14</div><div class="abs" style="left:115.8px;top:412.3px;width:9px;height:9px;border-radius:50%;background:#fbfcfd;box-shadow:0 0 1px #bbb"></div><svg class="abs" style="left:115.8px;top:412.3px" width="9" height="9" viewBox="0 0 9 9"><path d="M3.5,8 L3.5,2 L6,1.5 L5,4 L3.5,4.5" stroke="#e03040" stroke-width="1" fill="none"/></svg><div class="lg" style="left:127.2px;top:413px;color:#484848">&gt;17</div><div class="abs" style="left:45.0px;top:441.2px;width:9px;height:9px;border-radius:50%;background:#fbeeb0"></div><div class="abs" style="left:47.5px;top:443.2px;width:4px;height:5px;border-radius:2px 2px 1px 1px;background:#f2c418"></div><div class="lg" style="left:56.8px;top:441.9px;color:#484848">&gt;35</div><div class="abs" style="left:80.5px;top:441.2px;width:9px;height:9px;border-radius:50%;background:#fbe2b8"></div><div class="abs" style="left:83px;top:443.2px;width:4px;height:5px;border-radius:2px 2px 1px 1px;background:#f09a20"></div><div class="lg" style="left:92.3px;top:441.9px;color:#484848">&gt;37</div><div class="abs" style="left:115.8px;top:441.2px;width:9px;height:9px;border-radius:50%;background:#f8d0d4"></div><div class="abs" style="left:118.3px;top:443.2px;width:4px;height:5px;border-radius:2px 2px 1px 1px;background:#e01c2c"></div><div class="lg" style="left:127.2px;top:441.9px;color:#484848">&gt;39</div><div class="abs" style="left:45.0px;top:471.0px;width:9px;height:9px;border-radius:50%;background:#eef3f8"></div><div class="abs" style="left:46.0px;top:474.9px;width:7px;height:1.2px;background:#2a9ae0;box-shadow:0 -2.2px 0 #2a9ae0,0 2.2px 0 #2a9ae0"></div><div class="lg" style="left:56.8px;top:471.7px;color:#484848">&lt;999</div><div class="abs" style="left:80.5px;top:471.0px;width:9px;height:9px;border-radius:50%;background:#eef3f8"></div><div class="abs" style="left:81.5px;top:474.9px;width:7px;height:1.2px;background:#f0b040;box-shadow:0 -2.2px 0 #f0b040,0 2.2px 0 #f0b040"></div><div class="lg" style="left:92.3px;top:471.7px;color:#484848">&lt;499</div><div class="abs" style="left:115.8px;top:471.0px;width:9px;height:9px;border-radius:50%;background:#eef3f8"></div><div class="abs" style="left:116.8px;top:474.9px;width:7px;height:1.2px;background:#d82838;box-shadow:0 -2.2px 0 #d82838,0 2.2px 0 #d82838"></div><div class="lg" style="left:127.2px;top:471.7px;color:#484848">&lt;200</div><div class="abs" style="left:45.5px;top:499.5px;width:8.5px;height:8.5px;border-radius:50%;border:1.7px solid #d42838;background:#fff"></div><div class="lg" style="left:56.6px;top:499.2px;color:#484848">中气旋</div><svg class="abs" style="left:80.5px;top:498.5px" width="9" height="9" viewBox="0 0 9 9"><path d="M4.5,1.5 L8.5,7.5 L0.5,7.5 Z" fill="#d81c28"/></svg><div class="lg" style="left:91.8px;top:499.2px;color:#484848">冰雹</div><div class="abs" style="left:115.8px;top:498.5px;width:9px;height:9px;border-radius:50%;background:#e6f2fb"></div><svg class="abs" style="left:115.8px;top:498.5px" width="9" height="9" viewBox="0 0 9 9"><path d="M5.5,1 L2.5,5 L4.5,5 L3.5,8 L6.5,4 L4.5,4 Z" fill="#2a9ae0"/></svg><div class="lg" style="left:128.2px;top:499.2px;color:#484848">闪电</div><div class="abs" style="left:45px;top:515px;width:9px;height:9px;border-radius:50%;background:#e8eef5"></div><div class="abs" style="left:46.5px;top:518.5px;width:6px;height:2px;background:#5a7cae"></div><div class="lg" style="left:56.6px;top:515.7px;color:#484848">TITAN</div><div class="abs" style="left:80.5px;top:515px;width:9px;height:9px;border-radius:50%;background:#f1eef4"></div><svg class="abs" style="left:80.5px;top:515px" width="9" height="9" viewBox="0 0 9 9"><path d="M1,5.5 L5,4 L8,4.5" stroke="#d82030" stroke-width="1.4" fill="none"/><path d="M1,5.5 L4,5" stroke="#2840a0" stroke-width="1.4"/></svg><div class="lg" style="left:91.8px;top:515.7px;color:#484848">风暴</div><div class="abs" style="left:115.8px;top:515px;width:9px;height:9px;border-radius:50%;background:#eef1f6"></div><svg class="abs" style="left:115.8px;top:515px" width="9" height="9" viewBox="0 0 9 9"><path d="M5.5,0.8 L2.8,5 L4.6,5 L3.5,8.3 L6.5,4 L4.6,4 Z" fill="#3a4c8a"/></svg><div class="lg" style="left:128.2px;top:515.7px;color:#484848">冰雹上报</div><div class="abs" style="left:158.3px;top:339px;width:1px;height:188px;background:#dde5ee"></div><svg class="abs" style="left:160.0px;top:338.4px" width="9" height="9" viewBox="0 0 9 9"><rect x="0.5" y="0.5" width="8" height="8" fill="#dfe9f5" stroke="#b9c9dc" stroke-width="0.6"/><path d="M1.5,4.5 L3.6,6.8 L8.2,0.8" stroke="#2f7fd8" stroke-width="1.5" fill="none"/></svg><div class="lg" style="left:171.0px;top:339.6px;color:#333">强天气识别结果</div><div class="abs" style="left:159.5px;top:349.4px;width:117px;height:1px;background:#dfe6ee"></div><svg class="abs" style="left:160px;top:353.5px" width="9" height="9" viewBox="0 0 9 9"><path d="M4.5,1.2 L8.2,7.8 L0.8,7.8 Z" fill="none" stroke="#e03040" stroke-width="1.2"/></svg><div class="lg" style="left:171px;top:354.1px;color:#484848">冰雹</div><div class="abs" style="left:191.5px;top:354px;width:8.5px;height:8.5px;border-radius:50%;border:1.3px solid #2aa0d8"></div><div class="lg" style="left:202px;top:354.1px;color:#484848">强降水</div><div class="abs" style="left:226.5px;top:353.5px;width:9px;height:9px;border-radius:50%;background:#faf0f0"></div><svg class="abs" style="left:226.5px;top:353.5px" width="9" height="9" viewBox="0 0 9 9"><path d="M3,8 L3,1.5 L6.5,2 L5.5,4 L3,4" stroke="#e02030" stroke-width="1" fill="none"/></svg><div class="lg" style="left:236.7px;top:354.1px;color:#484848">雷雨大风</div><div class="abs" style="left:159.5px;top:369.5px;width:9px;height:9px;border-radius:50%;background:#f8eed0"></div><div class="lg" style="left:171px;top:370.1px;color:#484848">MARC</div><div class="abs" style="left:192.3px;top:369.5px;width:9px;height:9px;border-radius:50%;border:1.3px solid #f0c030;background:#fdf6dc"></div><div class="lg" style="left:203.8px;top:370.1px;color:#484848">中气旋</div><div class="abs" style="left:227.5px;top:373.5px;width:7px;height:1.2px;background:#d83040;transform:rotate(-10deg)"></div><div class="lg" style="left:237.8px;top:370.1px;color:#484848">阵风锋</div><div class="abs" style="left:159px;top:386.5px;width:116.6px;height:38.5px;border:1px solid #bcd8ec;border-radius:2px"></div><div class="abs" style="left:167px;top:384px;width:34px;height:8px;background:#f2f7fc"></div><div class="lg" style="left:170px;top:384.5px;color:#484848">中间信息</div><div class="abs" style="left:162px;top:397.5px;width:6.5px;height:6.5px;border:1px solid #5cba7a"></div><div class="lg" style="left:171.6px;top:396.8px;color:#484848">逆风区</div><div class="abs" style="left:195.6px;top:397.5px;width:6.5px;height:6.5px;border:1px solid #f0c48a"></div><div class="lg" style="left:205px;top:396.8px;color:#484848">大风区</div><svg class="abs" style="left:227.5px;top:397px" width="9" height="7" viewBox="0 0 9 7"><path d="M0.5,3.5 L6,3.5" stroke="#e01828" stroke-width="1.5"/><path d="M5,1 L8.5,3.5 L5,6 Z" fill="#e01828"/></svg><div class="lg" style="left:238.9px;top:396.8px;color:#484848">低空急流</div><svg class="abs" style="left:160.5px;top:412.5px" width="9" height="7" viewBox="0 0 9 7"><path d="M0.5,4.5 Q2.5,0.5 4.5,3.5 Q6.5,6.5 8.5,2.5" stroke="#445" stroke-width="1" fill="none"/></svg><div class="lg" style="left:171.8px;top:412.2px;color:#484848">辐合带</div><div class="lg" style="left:205.6px;top:412.2px;color:#484848">单体信息</div><svg class="abs" style="left:160.0px;top:430.3px" width="9" height="9" viewBox="0 0 9 9"><rect x="0.5" y="0.5" width="8" height="8" fill="#dfe9f5" stroke="#b9c9dc" stroke-width="0.6"/><path d="M1.5,4.5 L3.6,6.8 L8.2,0.8" stroke="#2f7fd8" stroke-width="1.5" fill="none"/></svg><div class="lg" style="left:171.0px;top:431.5px;color:#333">强天气落区</div><div class="abs" style="left:159.5px;top:441.3px;width:117px;height:1px;background:#dfe6ee"></div><div class="abs" style="left:160px;top:450px;width:7.5px;height:1px;background:#8aa"></div><div class="lg" style="left:170.5px;top:446.2px;color:#484848">实况</div><div class="abs" style="left:198px;top:450px;width:8.5px;height:1px;background:#aab"></div><div class="lg" style="left:209.6px;top:446.2px;color:#484848">预报</div><div class="abs" style="left:161.3px;top:462px;width:6.7px;height:7px;background:#9a1048"></div><div class="lg" style="left:171px;top:461.9px;color:#484848">强降水</div><div class="abs" style="left:196px;top:461.5px;width:8px;height:8px;border-radius:2px;background:#f5b828;box-shadow:0 0 1.5px #f8d070"></div><div class="lg" style="left:206.6px;top:461.9px;color:#484848">大风</div><svg class="abs" style="left:160.0px;top:474.8px" width="9" height="9" viewBox="0 0 9 9"><rect x="0.5" y="0.5" width="8" height="8" fill="#dfe9f5" stroke="#b9c9dc" stroke-width="0.6"/><path d="M1.5,4.5 L3.6,6.8 L8.2,0.8" stroke="#2f7fd8" stroke-width="1.5" fill="none"/></svg><div class="lg" style="left:171.0px;top:476px;color:#333">主观灾害落区</div><div class="abs" style="left:159.5px;top:485.8px;width:117px;height:1px;background:#dfe6ee"></div><svg class="abs" style="left:160px;top:490px" width="10" height="9" viewBox="0 0 10 9"><path d="M1.5,5.5 Q0.5,3 3,2.5 Q4,0 6.5,1 Q9.5,1.5 9,4.5 Q9.5,5.8 8,5.8 Z" fill="#3a40b0"/><path d="M3,7 L3,8.5 M5,7 L5,8.5 M7,7 L7,8.5" stroke="#6ac" stroke-width="0.7"/></svg><div class="lg" style="left:171px;top:490.7px;color:#484848">强降水</div><svg class="abs" style="left:196px;top:490px" width="8" height="9" viewBox="0 0 8 9"><path d="M5,0.5 L1.5,5 L3.8,5 L2.5,8.5 L6.5,3.5 L4.2,3.5 Z" fill="#f4c820"/></svg><div class="lg" style="left:206.6px;top:490.7px;color:#484848">雷电</div><div class="abs" style="left:231.5px;top:490.5px;width:7.5px;height:8px;border-radius:50%;border:2px solid #2456c8"></div><div class="lg" style="left:241.8px;top:490.7px;color:#484848">龙卷</div><svg class="abs" style="left:160.5px;top:505px" width="8" height="9" viewBox="0 0 8 9"><path d="M5,0.5 L1.5,4.5 L4,4.5 L2.5,8.5 L6.5,3.5 L4.2,3.5 Z" fill="#28a8e8"/></svg><div class="lg" style="left:171px;top:505.9px;color:#484848">冰雹</div><svg class="abs" style="left:195.5px;top:505px" width="10" height="9" viewBox="0 0 10 9"><path d="M5,0.8 L9,4.5 L5,8.2 L1,4.5 Z" fill="none" stroke="#556" stroke-width="1.5"/></svg><div class="lg" style="left:206.6px;top:505.9px;color:#484848">雷雨大风</div>
<!-- popup -->
<div class="abs" style="left:609px;top:230px;width:199px;height:188.5px;background:#fff;border-top:1.5px solid #4cc0f0;box-shadow:0 0 2px rgba(0,0,0,0.2)"></div>
<div class="abs" style="left:614px;top:236.5px;font-size:7px;line-height:9px;color:#3a98c8;white-space:nowrap;font-weight:bold">详细信息</div>
<div class="abs" style="left:609px;top:249.5px;width:199px;height:1px;background:#cfe0ea"></div>
<div class="abs" style="left:609px;top:249px;width:41px;height:1.5px;background:#3a88b8"></div>
<svg class="abs" style="left:794.5px;top:239px" width="5" height="5" viewBox="0 0 5 5"><path d="M0.5,0.5 L4.5,4.5 M4.5,0.5 L0.5,4.5" stroke="#c0c0c0" stroke-width="0.9"/></svg>
<div class="pl" style="left:614px;top:259.3px">发布单位：</div>
<div class="pb" style="left:648px;top:257px;width:57px;height:11.5px"></div>
<div class="pt" style="left:651px;top:259.3px">天津海洋中心气象</div>
<div class="pl" style="left:712px;top:259.3px">预警等级：</div>
<div class="pb" style="left:745px;top:257px;width:57px;height:11.5px"></div>
<div class="pt" style="left:747.5px;top:259.3px">海上大风蓝色预警</div>
<div class="pl" style="left:614px;top:276.5px">预警内容：</div>
<div class="pb" style="left:648px;top:274.8px;width:154px;height:39px"></div>
<div class="pt" style="left:651px;top:276.6px;line-height:12.7px">2017年11月22日16时15分发布海上大风蓝色预警信<br>号：预计今天傍晚到夜间,渤海西部中部海面将有西北<br>风7级，阵风8级，请有关单位和人员作好防范准备。</div>
<div class="pl" style="left:614px;top:321px">防御指南：</div>
<div class="pb" style="left:648px;top:319px;width:154px;height:39px"></div>
<div class="pt" style="left:651px;top:319.6px;line-height:13.3px">1.政府及相关部门按照职责做好防海上大风工作；2.<br>相关水域水上作业和过往船舶采取积极的应对措施，<br>如回港避风或者绕道航行等。</div>
<div class="pl" style="left:614px;top:365.5px">预报时效：</div>
<div class="pb" style="left:648px;top:363.5px;width:46.5px;height:12.5px"></div>
<div class="pt" style="left:651.5px;top:365.5px">24小时</div>
<div class="pl" style="left:700.5px;top:365.5px">发布时间：</div>
<div class="pb" style="left:733.5px;top:363.5px;width:68.5px;height:12.5px"></div>
<div class="pt" style="left:736.8px;top:366.3px;font-size:6.6px">2017-11-22 16:22</div>
<div class="pl" style="left:621px;top:383.5px">发布人：</div>
<div class="pb" style="left:648px;top:381.5px;width:46.5px;height:12.5px"></div>
<div class="pt" style="left:651.5px;top:383.5px">胡田田</div>
<div class="pl" style="left:706.5px;top:383.5px">签发人：</div>
<div class="pb" style="left:733.5px;top:381.5px;width:68.5px;height:12.5px"></div>
<div class="pt" style="left:736.8px;top:383.5px">常润祥</div>
<div class="abs" style="left:752.6px;top:400px;width:49.2px;height:15.5px;border:1px solid #d8d8d8;border-radius:2px;background:#fff"></div>
<div class="pt" style="left:757.5px;top:403.5px;color:#666">制作预警信号</div>
<!-- polygon label icon -->
<svg class="abs" style="left:575px;top:303px" width="20" height="21" viewBox="0 0 20 21"><rect x="0.8" y="1" width="18.5" height="19" fill="#1e2e96"/><rect x="1" y="1.3" width="11" height="13.8" fill="#dfe4f0"/><path d="M3.5,13.5 L5.5,3.5 L10,4.5 L7.5,7.5 L4.8,7.2" stroke="#333a66" stroke-width="1.2" fill="none"/><path d="M5.5,9 L10,8 L10.5,13 L6,13.5 Z" fill="#dfe8b0"/><rect x="13.4" y="4.8" width="4.8" height="3.2" fill="#b8c8f0"/><rect x="13.4" y="9.6" width="4.8" height="3.2" fill="#8ea8e0"/><rect x="2" y="16.3" width="2.5" height="2.5" fill="#c8d4f4"/><rect x="6" y="17" width="11" height="1.6" fill="#8ea0dc"/></svg>
<!-- bottom toolbar -->
<div class="abs" style="left:620px;top:513.3px;width:358px;height:25.8px;background:#0b57d2;border-radius:13px"></div>
<div class="abs" style="left:633.5px;top:513.3px;width:35.5px;height:25.8px;background:#0a45ac"></div>
<svg class="abs" style="left:0;top:0" width="1000" height="563" viewBox="0 0 1000 563"><path d="M650.7,515.4 C648.3,515.4 646.8,517.2 646.8,519.3 C646.8,521.2 648.4,522.3 649,523.9 L652.4,523.9 C653,522.3 654.6,521.2 654.6,519.3 C654.6,517.2 653.1,515.4 650.7,515.4 Z" fill="#fff"/><rect x="649.2" y="524.4" width="3" height="2" fill="#fff"/><rect x="683.2" y="515.6" width="6.8" height="10.4" fill="none" stroke="#dcecff" stroke-width="0.9"/><path d="M684.8,518 L688,518 M684.8,520 L687,520" stroke="#dcecff" stroke-width="0.7"/><path d="M686,525 L691.8,518.2" stroke="#0b57d2" stroke-width="2.6"/><path d="M686,525 L691.8,518.2" stroke="#dcecff" stroke-width="1.2"/><path d="M719.3,523.6 L719.3,519.6 C719.3,517.2 721,515.8 723.3,515.8 C725.6,515.8 727.3,517.2 727.3,519.6 L727.3,523.6 Z" fill="#dcecff"/><rect x="718.4" y="524" width="9.8" height="2.1" fill="#dcecff"/><rect x="721.3" y="518" width="1" height="4" fill="#0b57d2" opacity="0.6"/><path d="M753,520.5 L757.5,516 L762,515.8 L767.6,519.5 L763.5,524 L759.5,526.2 L756,523 Z" fill="#dcecff"/><path d="M758,522.5 L763.5,524 L759.5,526.2 Z" fill="#9cc4f0"/><circle cx="796.5" cy="521.6" r="5.5" fill="#dcecff"/><path d="M796.5,521.6 L796.5,517.3 A4.3,4.3 0 0 1 800.224,519.45 Z" fill="#0b4fc0"/><path d="M796.5,521.6 L800.224,523.75 A4.3,4.3 0 0 1 796.5,525.9 Z" fill="#0b4fc0"/><path d="M796.5,521.6 L792.776,523.75 A4.3,4.3 0 0 1 792.776,519.45 Z" fill="#0b4fc0"/><circle cx="796.5" cy="521.6" r="1.1" fill="#dcecff"/><rect x="827" y="516" width="4.8" height="4.2" fill="#dcecff"/><rect x="827" y="522.3" width="4.8" height="4.4" fill="#dcecff"/><rect x="833" y="516.3" width="5.6" height="1.4" fill="#dcecff"/><rect x="833" y="518.8" width="5.6" height="1.4" fill="#dcecff"/><rect x="833" y="522.5" width="5.6" height="1.4" fill="#dcecff"/><rect x="833" y="525.2" width="5.6" height="1.4" fill="#dcecff"/><path d="M866.8,518.5 L875,526.3" stroke="#dcecff" stroke-width="2"/><path d="M864.5,517.8 C864.5,515.5 866.5,514.8 868,515.6 L866.6,517.2 L867.4,518.3 L869,517 C869.6,518.8 868.6,520.4 866.6,520.2 Z" fill="#dcecff"/><path d="M875.3,515.6 L866.3,525.8" stroke="#dcecff" stroke-width="1.9"/><ellipse cx="903.6" cy="521.3" rx="4.5" ry="3.6" fill="#dcecff"/><path d="M900.5,523.8 L899.5,526.2 L903.5,524.5 Z" fill="#dcecff"/><circle cx="903.8" cy="520.6" r="1.4" fill="#0b57d2"/><path d="M908.3,518 C908.3,516 911.8,515.6 911.8,517.6 C911.8,518.8 910.2,519 910.2,520.2" stroke="#dcecff" stroke-width="1.3" fill="none"/><circle cx="910.1" cy="521.6" r="0.7" fill="#dcecff"/><path d="M938.5,515.5 L944.8,515.5 L947.2,518 L947.2,526.2 L938.5,526.2 Z" fill="#dcecff"/><path d="M940.2,519.6 L945.5,519.6 M940.2,521.6 L945.5,521.6 M940.2,523.6 L943.5,523.6" stroke="#0b57d2" stroke-width="0.8"/></svg>
<div class="abs" style="left:644px;top:529.5px;width:14px;text-align:center;font-size:6.8px;line-height:9px;white-space:nowrap;font-weight:bold;color:#fff;">状态</div>
<div class="abs" style="left:673.5px;top:529.5px;width:28px;text-align:center;font-size:6.8px;line-height:9px;white-space:nowrap;color:#c4daf8;">指导反馈</div>
<div class="abs" style="left:709.5px;top:529.5px;width:28px;text-align:center;font-size:6.8px;line-height:9px;white-space:nowrap;color:#c4daf8;">预警信号</div>
<div class="abs" style="left:746.5px;top:529.5px;width:28px;text-align:center;font-size:6.8px;line-height:9px;white-space:nowrap;color:#c4daf8;">灾害落区</div>
<div class="abs" style="left:783px;top:529.5px;width:28px;text-align:center;font-size:6.8px;line-height:9px;white-space:nowrap;color:#c4daf8;">预警制作</div>
<div class="abs" style="left:819.5px;top:529.5px;width:28px;text-align:center;font-size:6.8px;line-height:9px;white-space:nowrap;color:#c4daf8;">详细信息</div>
<div class="abs" style="left:856px;top:529.5px;width:28px;text-align:center;font-size:6.8px;line-height:9px;white-space:nowrap;color:#c4daf8;">预警设置</div>
<div class="abs" style="left:892.5px;top:529.5px;width:28px;text-align:center;font-size:6.8px;line-height:9px;white-space:nowrap;color:#c4daf8;">帮助文档</div>
<div class="abs" style="left:935.5px;top:529.5px;width:14px;text-align:center;font-size:6.8px;line-height:9px;white-space:nowrap;color:#c4daf8;">日志</div>
<div class="abs" style="left:964.5px;top:513.5px;width:25.5px;height:25.5px;border-radius:50%;background:#2f86e6;border:1.5px solid #e8f2ff;box-shadow:0 0 1.5px rgba(0,0,0,0.3)"></div>
<svg class="abs" style="left:970px;top:519.5px" width="14" height="13" viewBox="0 0 14 13"><path d="M4.5,3 L4.5,1.5 L9.5,1.5 L9.5,3" stroke="#fff" stroke-width="1.2" fill="none"/><rect x="1" y="3" width="12" height="9" rx="1" fill="#fff"/><rect x="1" y="6.5" width="12" height="1" fill="#2f86e6"/><rect x="3.2" y="5.8" width="1.4" height="2.5" fill="#2f86e6"/><rect x="9.4" y="5.8" width="1.4" height="2.5" fill="#2f86e6"/></svg>

<!-- coordinate bar -->
<div class="abs" style="left:35px;top:537.5px;width:87px;height:12px;background:#2f80e4"></div>
<div class="abs" style="left:42px;top:538.7px;font-size:6.95px;line-height:10px;color:#f4f8ff;white-space:nowrap;font-weight:bold">经度:120.77 纬度:38.67</div>
<!-- footer -->
<div class="abs" style="left:0;top:548.5px;width:1000px;height:14.5px;background:#0a409a"></div>
<div class="abs" style="left:5px;top:551.5px;font-size:6.47px;line-height:9px;color:#e6eeff;white-space:nowrap">天津市气象局 版权所有 Copyright© NRIET.</div>
</body></html>
